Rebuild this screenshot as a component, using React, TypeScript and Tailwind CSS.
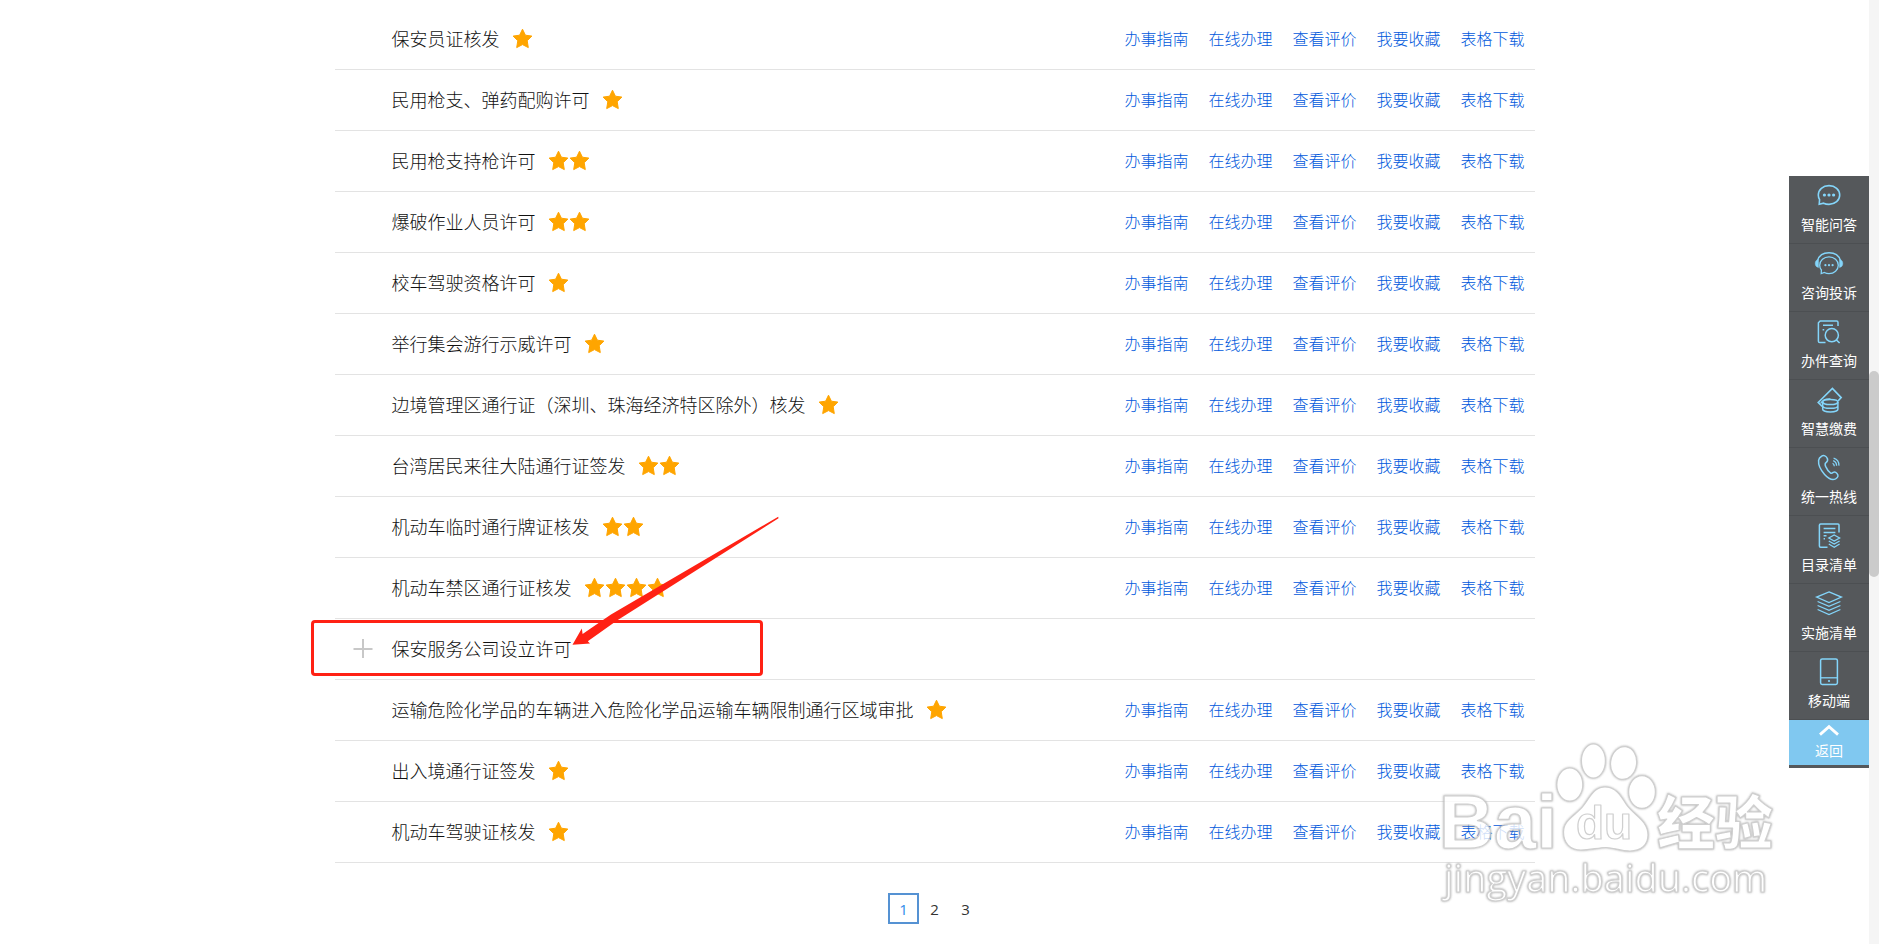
import type { ReactNode } from "react";

type Service = { name: string; stars: number; expandable?: boolean };

const SERVICES: Service[] = [
  { name: "保安员证核发", stars: 1 },
  { name: "民用枪支、弹药配购许可", stars: 1 },
  { name: "民用枪支持枪许可", stars: 2 },
  { name: "爆破作业人员许可", stars: 2 },
  { name: "校车驾驶资格许可", stars: 1 },
  { name: "举行集会游行示威许可", stars: 1 },
  { name: "边境管理区通行证（深圳、珠海经济特区除外）核发", stars: 1 },
  { name: "台湾居民来往大陆通行证签发", stars: 2 },
  { name: "机动车临时通行牌证核发", stars: 2 },
  { name: "机动车禁区通行证核发", stars: 4 },
  { name: "保安服务公司设立许可", stars: 0, expandable: true },
  { name: "运输危险化学品的车辆进入危险化学品运输车辆限制通行区域审批", stars: 1 },
  { name: "出入境通行证签发", stars: 1 },
  { name: "机动车驾驶证核发", stars: 1 },
];

const ACTIONS = ["办事指南", "在线办理", "查看评价", "我要收藏", "表格下载"];

function Star() {
  return (
    <svg className="size-[21px]" viewBox="0 0 21 21" aria-hidden="true">
      <path
        d="M10.5 1.2 13.4 7.2 19.9 8.1 15.2 12.7 16.3 19.6 10.5 16.6 4.7 19.6 5.8 12.7 1.1 8.1 7.6 7.2Z"
        fill="#ffa500"
        stroke="#ffa500"
        strokeWidth="1"
        strokeLinejoin="round"
      />
    </svg>
  );
}

function Annotation() {
  return (
    <>
      <div className="pointer-events-none absolute top-px -left-6 z-10 h-14 w-[452px] rounded-sm border-3 border-[#ff2114]" />
      <svg
        className="pointer-events-none absolute -top-[104px] left-[236px] z-10 h-[132px] w-[210px]"
        viewBox="0 0 210 132"
        aria-hidden="true"
      >
        <path
          d="M1.5 129.7 10.8 113.5 11.6 119 40 99.5 207.2 1.8 207.5 3.2 46 105.5 16.8 126.2 19 128.6Z"
          fill="#ff2114"
        />
      </svg>
    </>
  );
}

function ServiceRow({ service }: { service: Service }) {
  return (
    <li className="relative flex h-[61px] items-center border-b border-[#e3e3e3] pr-2.5 pb-0.5">
      <div className="flex w-[57px] shrink-0 justify-center">
        {service.expandable && (
          <button type="button" aria-label="展开" className="text-[#c8c8c8]">
            <svg className="size-5" viewBox="0 0 20 20" stroke="currentColor" strokeWidth="2" aria-hidden="true">
              <path d="M10 1v19M.5 11h19" />
            </svg>
          </button>
        )}
      </div>
      <span className="text-lg font-light text-[#111]">{service.name}</span>
      <span className="ml-3 flex">
        {Array.from({ length: service.stars }, (_, i) => (
          <Star key={i} />
        ))}
      </span>
      {!service.expandable && (
        <nav className="ml-auto flex gap-5 text-base font-light text-[#0058dc]">
          {ACTIONS.map((a) => (
            <a key={a} href="#">
              {a}
            </a>
          ))}
        </nav>
      )}
      {service.expandable && <Annotation />}
    </li>
  );
}

const DOTS = (y: number, gap: number, r: number) => (
  <g fill="currentColor" stroke="none">
    <circle cx={40 - gap} cy={y} r={r} />
    <circle cx={40} cy={y} r={r} />
    <circle cx={40 + gap} cy={y} r={r} />
  </g>
);

const TOOLS: { label: string; icon: ReactNode }[] = [
  {
    label: "智能问答",
    icon: (
      <>
        <path d="M30.2 28.2 30.6 23.6C29.7 22.3 29.3 20.8 29.3 19 29.3 13.6 33.9 9.6 40 9.6S50.7 13.6 50.7 19 46.1 28.4 40 28.4C38 28.4 36.2 28 34.6 27.2Z" strokeWidth="1.6" />
        {DOTS(19, 4.6, 1.6)}
      </>
    ),
  },
  {
    label: "咨询投诉",
    icon: (
      <>
        <path d="M28.6 16.4C30 11.6 34.4 8.7 40 8.7S50 11.6 51.4 16.4" strokeWidth="1.4" />
        <path d="M29.5 15.2v8.4C27.2 23 26.2 21.4 26.2 19.4s1-3.6 3.3-4.2ZM50.5 15.2v8.4c2.3-.6 3.3-2.2 3.3-4.2s-1-3.6-3.3-4.2Z" fill="currentColor" strokeWidth=".4" />
        <path d="M32.2 29.5 32.4 26C31.3 24.6 30.7 23 30.7 21.2 30.7 16.3 34.9 12.8 40 12.8s9.3 3.5 9.3 8.4-4.2 8.4-9.3 8.4c-1.7 0-3.2-.4-4.6-1.1Z" />
        {DOTS(21.2, 3.6, 1.1)}
      </>
    ),
  },
  {
    label: "办件查询",
    icon: (
      <>
        <path d="M49 14V10.4Q49 9 47.6 9H31.2L29.4 10.8V29.2Q29.4 30.6 30.8 30.6H36.5" strokeWidth="1.5" />
        <path d="M34 13.2H44M33.6 17.8H35.2" strokeWidth="1.5" />
        <circle cx="42.8" cy="23.2" r="6.6" strokeWidth="1.5" />
        <path d="M47.4 28 50.6 31" strokeWidth="1.6" />
      </>
    ),
  },
  {
    label: "智慧缴费",
    icon: (
      <>
        <path d="M33.2 26.5 29.2 22.4 43.4 8.4 52.2 17.6 49 21" strokeWidth="1.6" />
        <path d="M31.6 23.6C33 20.4 37 18.6 41.4 18.8" />
        <ellipse cx="41.3" cy="22" rx="7.6" ry="2.6" strokeWidth="1.5" />
        <path d="M33.7 22v7.2c0 1.5 3.4 2.7 7.6 2.7s7.6-1.2 7.6-2.7V22M33.7 25.7c0 1.5 3.4 2.6 7.6 2.6s7.6-1.1 7.6-2.6" strokeWidth="1.5" />
      </>
    ),
  },
  {
    label: "统一热线",
    icon: (
      <>
        <path d="M32.6 8.2C34.8 6.8 37.2 7.8 38.4 10.6 39 12.4 38.6 13.6 37 14.6 35.8 15.4 35.8 16.4 36.6 18.4 37.8 21.2 39.4 23.4 41.4 24.8 42.4 25.6 43.2 25.2 44.2 24.4 45.4 23.6 46.6 23.8 47.8 25.2 50 27.6 49 29.4 46.6 30.8 43.6 32.4 39.4 30.6 35.6 26.4 31.6 22 29.2 16.4 29.6 12.4 29.8 10.6 30.8 9 32.6 8.2Z" strokeWidth="1.5" />
        <path d="M43.6 15.2c1.1.6 1.7 1.6 1.7 3M44.2 12.6c2.2.9 3.4 2.7 3.4 5.2M44.6 10c3.5 1 5.5 3.8 5.3 7.6" strokeWidth="1.3" />
      </>
    ),
  },
  {
    label: "目录清单",
    icon: (
      <>
        <path d="M50 16.5V9Q50 8 49 8H31.6Q30.4 8 30.4 9.2V30.1Q30.4 31.3 31.6 31.3H38.5" strokeWidth="1.5" />
        <path d="M34.6 12.5H46.4M34.6 16.5H46.4M34.6 19.8H37.5M34.6 22.8H36" strokeWidth="1.4" />
        <path d="M45.2 19 50.6 22 45.2 25 39.8 22ZM39.8 25 45.2 28 50.6 25M39.8 28 45.2 31.2 50.6 28" />
      </>
    ),
  },
  {
    label: "实施清单",
    icon: (
      <path d="M40 7.9 52.4 13.1 40 18.5 27.6 13.1ZM28.6 17.5 40 22.3 51.4 17.5M28.6 21.5 40 26.3 51.4 21.5M28.6 25.5 40 30.5 51.4 25.5" />
    ),
  },
  {
    label: "移动端",
    icon: (
      <>
        <rect x="31.6" y="7" width="16.8" height="25.4" rx="1.6" strokeWidth="1.5" />
        <path d="M31.6 25.8H48.4" />
        <circle cx="40" cy="29" r="1.1" fill="currentColor" stroke="none" />
      </>
    ),
  },
];

function ToolBar() {
  return (
    <aside className="fixed inset-y-0 right-2.5 z-20 flex w-20 flex-col justify-center text-sm text-white">
      <div className="bg-[#55585b] pb-[3px]">
        {TOOLS.map((t) => (
          <a
            key={t.label}
            href="#"
            className="flex h-[68px] flex-col items-center border-b border-[#4c4f52] pt-2 leading-5"
          >
            <svg
              className="h-7 w-8 shrink-0 text-[#84d5fa]"
              viewBox="24 8 32 28"
              fill="none"
              stroke="currentColor"
              strokeWidth="1.3"
              overflow="visible"
              aria-hidden="true"
            >
              {t.icon}
            </svg>
            <span className="mt-0.5">{t.label}</span>
          </a>
        ))}
        <a href="#" className="flex h-[45px] flex-col items-center bg-[#80c8f0] pt-1 leading-5">
          <svg className="h-3 w-5 shrink-0" viewBox="0 0 20 12" fill="none" stroke="currentColor" strokeWidth="2.8" aria-hidden="true">
            <path d="M1 10.6 10 2.6 19 10.6" />
          </svg>
          <span className="mt-1">返回</span>
        </a>
      </div>
    </aside>
  );
}

function Watermark() {
  return (
    <svg
      className="pointer-events-none absolute right-[91px] top-[736px] z-10 h-[176px] w-[348px]"
      viewBox="1440 736 348 176"
      aria-hidden="true"
    >
      <g
        className="opacity-80 drop-shadow-[0_0_1px_#999999]"
        fill="#ffffff"
        stroke="#c4c4c4"
        strokeWidth="1.2"
        strokeLinejoin="round"
      >
        <text x="1439" y="848" fontSize="76" fontWeight="700" fontFamily="'Liberation Sans', Arial, sans-serif">
          Bai
        </text>
        <ellipse cx="1569.8" cy="784.6" rx="13" ry="16.6" />
        <ellipse cx="1593.4" cy="761" rx="12" ry="17" />
        <ellipse cx="1623.6" cy="763" rx="13" ry="16.5" transform="rotate(8 1623.6 763)" />
        <ellipse cx="1642" cy="792" rx="13.4" ry="16.4" />
        <path d="M1605 787C1616 787 1621 796 1626 804 1633 815 1648 820 1648 835 1648 845 1641 851 1630 851 1620 851 1614 847.5 1606 847.5S1591 850 1581 850C1570 850 1563.5 843 1563.5 832 1563.5 819 1577 815 1584 805 1590 797 1594 787 1605 787Z" />
        <text x="1576" y="839" fontSize="46" fontWeight="700" fontFamily="'Liberation Sans', Arial, sans-serif">
          du
        </text>
        <text x="1657" y="844" fontSize="58" fontWeight="900" fontFamily="'Noto Sans CJK SC', sans-serif">
          经验
        </text>
        <text x="1444" y="892" fontSize="38" fontWeight="500" fontFamily="'Open Sans', sans-serif">
          jingyan.baidu.com
        </text>
      </g>
    </svg>
  );
}

export default function App() {
  return (
    <div className="relative min-h-screen overflow-x-hidden bg-white pr-2.5 font-['Noto_Sans_CJK_SC',sans-serif]">
      <main className="mx-auto max-w-[1200px] pt-[9px]">
        <ul>
          {SERVICES.map((s) => (
            <ServiceRow key={s.name} service={s} />
          ))}
        </ul>
        <nav aria-label="分页" className="mt-[30px] flex justify-center font-['Open_Sans',sans-serif] text-[15px] text-[#333]">
          {[1, 2, 3].map((n) => (
            <a
              key={n}
              href="#"
              className={
                n === 1
                  ? "flex size-[31px] items-center justify-center border-2 border-[#5592d3] pt-0.5 text-[#2f8bea]"
                  : "flex size-[31px] items-center justify-center pt-0.5"
              }
            >
              {n}
            </a>
          ))}
        </nav>
      </main>
      <Watermark />
      <ToolBar />
      <div className="fixed inset-y-0 right-0 w-2.5 bg-[#f5f5f5] pt-[371px]">
        <div className="h-[206px] rounded-full bg-[#cbcbcb]" />
      </div>
    </div>
  );
}
